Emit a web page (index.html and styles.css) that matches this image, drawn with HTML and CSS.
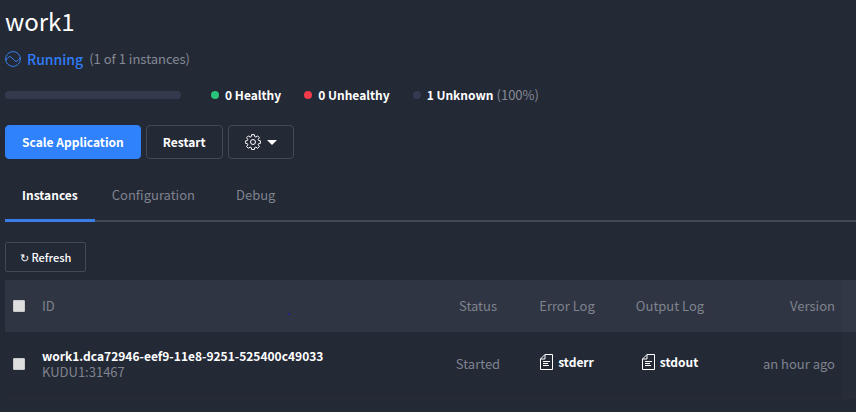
FILE: index.html
```html
<!DOCTYPE html>
<html lang="en">
<head>
<meta charset="utf-8">
<title>work1</title>
<link rel="stylesheet" href="styles.css">
</head>
<body>
<main class="page">
  <h1 class="title">work1</h1>
  <div class="status">
    <svg class="status-icon" viewBox="0 0 16 16" width="16" height="16" aria-hidden="true"><circle cx="8" cy="8" r="7.4"/><path d="M.8 9.500C2.500 7 3.400 5.700 5 5.700c2.600 0 3.400 4.600 6 4.600 1.600 0 2.500-1.300 4.200-3.800"/></svg>
    <span class="status-name">Running</span>
    <span class="muted">(1 of 1 instances)</span>
  </div>
  <div class="health">
    <div class="health-bar"></div>
    <ul class="legend">
      <li><span class="dot healthy"></span><b>0 Healthy</b></li>
      <li><span class="dot unhealthy"></span><b>0 Unhealthy</b></li>
      <li><span class="dot unknown"></span><b>1 Unknown</b> <span class="muted">(100%)</span></li>
    </ul>
  </div>
  <div class="actions">
    <button class="btn primary" type="button">Scale Application</button>
    <button class="btn" type="button">Restart</button>
    <button class="btn" type="button" aria-label="Settings">
      <svg class="gear" viewBox="0 0 16 16" width="16" height="16" aria-hidden="true"><path d="M6.700.6h2.600l.4 2 1.200.5 1.700-1.200 1.800 1.800-1.200 1.700.5 1.200 2 .4v2.200l-2 .4-.5 1.200 1.200 1.700-1.800 1.800-1.700-1.200-1.200.5-.4 2H6.700l-.4-2-1.200-.5-1.700 1.200-1.800-1.800 1.200-1.700-.5-1.200-2-.4V7l2-.4.5-1.200-1.200-1.700 1.800-1.800 1.700 1.200 1.200-.5z"/><circle cx="8" cy="8" r="2.500"/></svg>
      <svg class="caret" viewBox="0 0 10 5" width="10" height="5" aria-hidden="true"><path d="M0 0h10L5 5z"/></svg>
    </button>
  </div>
  <nav class="tabs">
    <a class="tab active" href="#instances">Instances</a>
    <a class="tab" href="#configuration">Configuration</a>
    <a class="tab" href="#debug">Debug</a>
  </nav>
  <button class="btn small" type="button">↻ Refresh</button>
  <table class="instances">
    <colgroup><col class="c-check"><col><col class="c-status"><col class="c-error"><col class="c-output"><col class="c-version"><col class="c-end"></colgroup>
    <thead>
      <tr>
        <th><input type="checkbox" aria-label="Select all"></th>
        <th class="left id-head">ID</th>
        <th>Status</th>
        <th>Error Log</th>
        <th>Output Log</th>
        <th class="right">Version</th>
        <td class="end"></td>
      </tr>
    </thead>
    <tbody>
      <tr>
        <td><input type="checkbox" aria-label="Select instance"></td>
        <td class="left"><a class="strong" href="#task">work1.dca72946-eef9-11e8-9251-525400c49033</a><span class="host">KUDU1:31467</span></td>
        <td>Started</td>
        <td><a class="log" href="#stderr"><svg class="doc" viewBox="0 0 13 16" width="13" height="16" aria-hidden="true"><path d="M5 .5h7.500v15H.5V5zM5 .5V5H.5M3 7.500h7M3 9.500h5M3 11.500h6"/></svg>stderr</a></td>
        <td><a class="log" href="#stdout"><svg class="doc" viewBox="0 0 13 16" width="13" height="16" aria-hidden="true"><path d="M5 .5h7.500v15H.5V5zM5 .5V5H.5M3 7.500h7M3 9.500h5M3 11.500h6"/></svg>stdout</a></td>
        <td class="right">an hour ago</td>
        <td class="end"></td>
      </tr>
    </tbody>
  </table>
</main>
</body>
</html>
```
FILE: styles.css
```css
* { box-sizing: border-box; }
body {
  margin: 0;
  background: #242936;
  color: #7f838e;
  font: 13px/16px "Noto Sans CJK SC", "Noto Sans", sans-serif;
}
a { color: inherit; text-decoration: none; }
.page { padding: 5px 0 0 5px; }
.title { margin: 0; color: #fff; font-size: 24px; font-weight: 400; line-height: 32px; }
.status { display: flex; align-items: center; gap: 6px; height: 20px; margin-top: 12px; }
.status-icon { fill: none; stroke: #3a7de8; stroke-width: 1; }
.status-name { color: #2f7df6; font-size: 14px; font-weight: 500; }
.muted { color: #858995; }
.health { display: flex; align-items: center; gap: 30px; height: 20px; margin-top: 16px; }
.health-bar { width: 176px; height: 8px; border-radius: 4px; background: #343a4d; }
.legend { display: flex; gap: 23px; margin: 0; padding: 0 0 1px; list-style: none; }
.legend li { display: flex; align-items: center; gap: 3px; }
.legend b { color: #fff; font-size: 12px; font-weight: 700; }
.dot { width: 8px; height: 8px; margin-right: 3px; border-radius: 50%; }
.healthy { background: #2ac57b; }
.unhealthy { background: #f33a4b; }
.unknown { background: #343a52; }
.actions { display: flex; gap: 5px; margin-top: 20px; }
.btn {
  display: inline-flex; align-items: center; justify-content: center; gap: 6px;
  height: 34px; padding: 0 16px;
  border: 1px solid #434956; border-radius: 4px;
  background: transparent; color: #fff;
  font: 700 12px/16px "Noto Sans CJK SC", "Noto Sans", sans-serif;
}
.primary { background: #2f82fb; border-color: #2f82fb; }
.gear { fill: none; stroke: #fff; stroke-width: 1; }
.caret { fill: #fff; }
.tabs { display: flex; height: 50px; margin-top: 13px; border-bottom: 2px solid #434857; }
.tab { display: flex; align-items: center; height: 50px; padding: 0 17px 2px; border-bottom: 3px solid transparent; }
.tab.active { color: #fff; font-size: 12px; font-weight: 700; border-color: #3a7de8; }
.tab + .tab + .tab { margin-left: 7px; }
.small { height: 30px; margin-top: 20px; padding: 0 14px; border-radius: 2px; font-size: 11px; font-weight: 500; }
.instances { width: 100%; margin-top: 8px; border-collapse: collapse; table-layout: fixed; }
.c-check { width: 31px; }
.c-status { width: 84px; }
.c-error { width: 94px; }
.c-output { width: 112px; }
.c-version { width: 116px; }
.c-end { width: 14px; }
th, td { padding: 0; font-weight: 400; text-align: center; vertical-align: middle; }
thead tr { height: 52px; background: #303543; }
tbody tr { height: 66px; border-bottom: 1px solid #272c38; }
tbody td { padding-bottom: 2px; }
.left { padding-left: 6px; text-align: left; }
.right { padding-right: 7px; text-align: right; }
thead .end { background: #333846; }
tbody .end { background: #272c39; }
.id-head { position: relative; }
.id-head::after {
  content: ""; position: absolute; left: 252px; top: 33px;
  width: 2px; height: 2px; background: #23238a;
}
.strong { color: #fff; font-size: 12px; font-weight: 700; }
.host { display: block; }
.log { display: inline-flex; align-items: center; gap: 5px; color: #fff; font-size: 12px; font-weight: 700; }
.doc { fill: none; stroke: #fff; stroke-width: 1; }
input[type="checkbox"] {
  appearance: none; display: block; width: 12px; height: 12px; margin: 0 0 0 8px;
  border: 1px solid #c9c9c9; border-radius: 1px; background: #dedede;
}
```
